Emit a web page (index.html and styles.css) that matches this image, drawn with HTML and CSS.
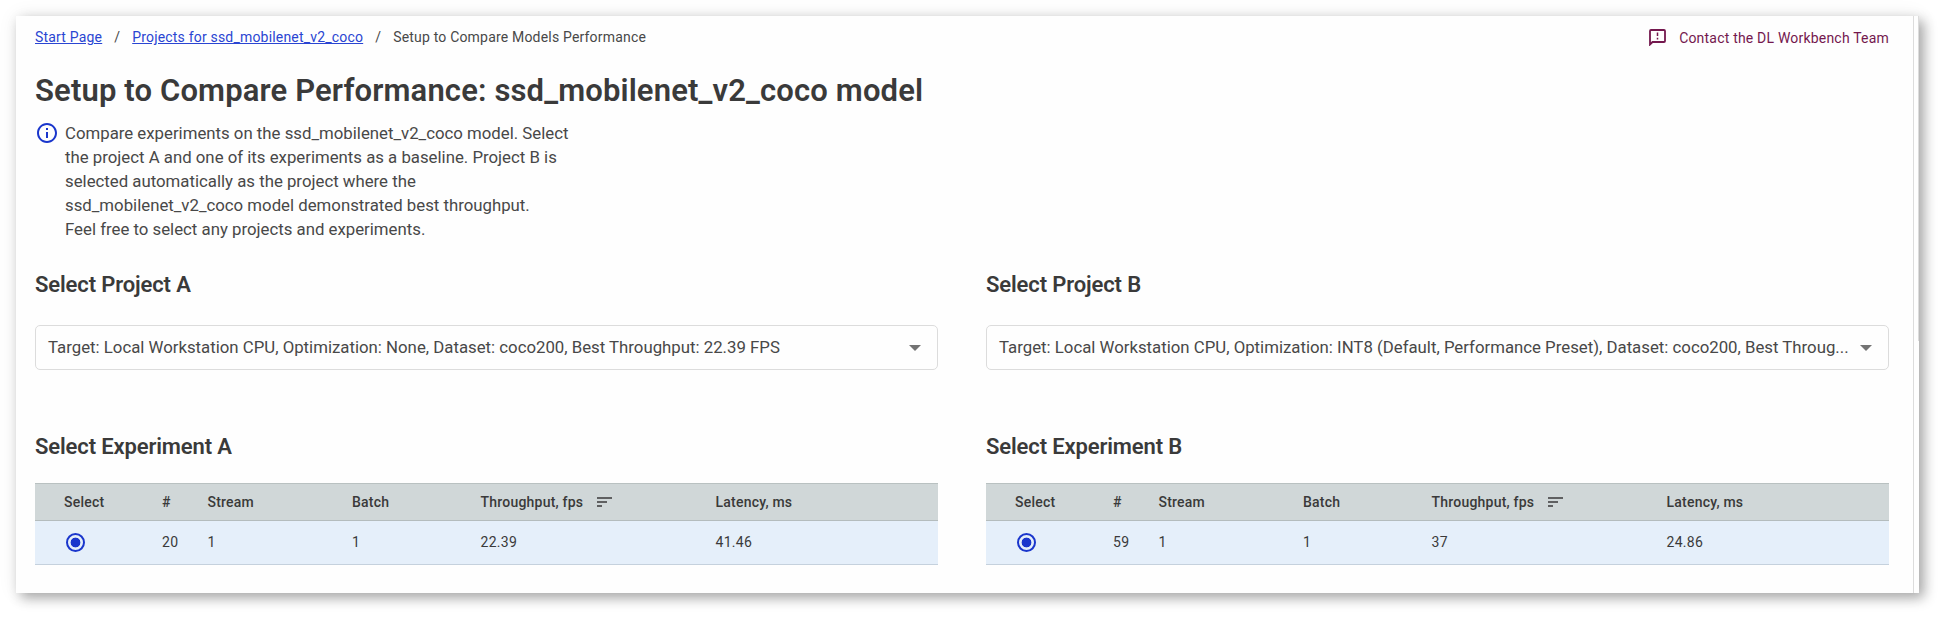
FILE: index.html
```html
<!DOCTYPE html>
<html lang="en">
<head>
<meta charset="utf-8">
<title>Setup to Compare Performance</title>
<link rel="stylesheet" href="styles.css">
</head>
<body>
<div class="window">
  <main class="page">
    <header class="topbar">
      <nav class="crumbs"><a class="crumb-link" href="#">Start Page</a><span class="sep">/</span><a class="crumb-link" href="#">Projects for ssd_mobilenet_v2_coco</a><span class="sep">/</span><span>Setup to Compare Models Performance</span></nav>
      <a class="contact" href="#">
        <svg class="contact-icon" viewBox="0 0 17 17"><path d="M1 15.5V2Q1 1 2 1H15Q16 1 16 2V12Q16 13 15 13H3.5Z" fill="none" stroke="currentColor" stroke-width="1.8"/><path d="M8.5 3.5V7M8.5 8.7V10.4" stroke="currentColor" stroke-width="1.5"/></svg>
        <span>Contact the DL Workbench Team</span>
      </a>
    </header>
    <h1 class="title">Setup to Compare Performance: ssd_mobilenet_v2_coco model</h1>
    <section class="info">
      <svg class="info-icon" viewBox="0 0 24 24"><path fill="currentColor" d="M11 7h2v2h-2zm0 4h2v6h-2zm1-9C6.48 2 2 6.48 2 12s4.48 10 10 10 10-4.48 10-10S17.52 2 12 2zm0 18c-4.41 0-8-3.59-8-8s3.59-8 8-8 8 3.59 8 8-3.59 8-8 8z"/></svg>
      <p class="info-text">Compare experiments on the ssd_mobilenet_v2_coco model. Select the project A and one of its experiments as a baseline. Project B is selected automatically as the project where the ssd_mobilenet_v2_coco model demonstrated best throughput.<br>Feel free to select any projects and experiments.</p>
    </section>
    <div class="columns">
      <section class="column">
        <h2 class="heading">Select Project A</h2>
        <div class="select"><span class="select-value">Target: Local Workstation CPU, Optimization: None, Dataset: coco200, Best Throughput: 22.39 FPS</span><span class="arrow"></span></div>
        <h2 class="heading">Select Experiment A</h2>
        <div class="table">
          <div class="row head"><span>Select</span><span>#</span><span>Stream</span><span>Batch</span><span class="sortable">Throughput, fps<svg class="sort-icon" viewBox="0 0 15 10"><path d="M0 1H15M0 5H10M0 9H5" stroke="currentColor" stroke-width="1.5"/></svg></span><span>Latency, ms</span></div>
          <div class="row body"><span class="radio"></span><span>20</span><span>1</span><span>1</span><span>22.39</span><span>41.46</span></div>
        </div>
      </section>
      <section class="column">
        <h2 class="heading">Select Project B</h2>
        <div class="select"><span class="select-value">Target: Local Workstation CPU, Optimization: INT8 (Default, Performance Preset), Dataset: coco200, Best Throug...</span><span class="arrow"></span></div>
        <h2 class="heading">Select Experiment B</h2>
        <div class="table">
          <div class="row head"><span>Select</span><span>#</span><span>Stream</span><span>Batch</span><span class="sortable">Throughput, fps<svg class="sort-icon" viewBox="0 0 15 10"><path d="M0 1H15M0 5H10M0 9H5" stroke="currentColor" stroke-width="1.5"/></svg></span><span>Latency, ms</span></div>
          <div class="row body"><span class="radio"></span><span>59</span><span>1</span><span>1</span><span>37</span><span>24.86</span></div>
        </div>
      </section>
    </div>
  </main>
  <div class="scrollbar"><div class="thumb"></div></div>
</div>
</body>
</html>
```
FILE: styles.css
```css
* { box-sizing: border-box; }
body {
  margin: 0;
  padding: 16px 24px 24px 16px;
  height: 617px;
  overflow: hidden;
  background: #fff;
  color: #3a3a3a;
  font-family: Roboto, "Liberation Sans", sans-serif;
}
.window {
  display: flex;
  height: 577px;
  background: #fefefe;
  box-shadow: 5px 5px 12px rgba(0, 0, 0, 0.32), 0 0 18px rgba(0, 0, 0, 0.08);
}
.page {
  flex: 1;
  min-width: 0;
  padding: 12px 24px 0 19px;
}
.scrollbar {
  width: 6px;
  border-left: 1px solid #dcdcdc;
}
.thumb {
  height: 325px;
  border-right: 1px solid #dcdcdc;
}
.topbar {
  display: flex;
  justify-content: space-between;
  height: 20px;
  font-size: 14px;
  line-height: 20px;
}
.crumbs {
  display: flex;
  color: #484848;
  letter-spacing: 0.19px;
  line-height: 18px;
}
.crumb-link {
  color: #2a45d2;
  text-decoration: underline;
}
.sep { margin: 0 12px; }
.contact {
  display: flex;
  gap: 13px;
  color: #74184e;
  font-weight: 450;
  letter-spacing: 0.2px;
  line-height: 21px;
  text-decoration: none;
}
.contact-icon {
  width: 17px;
  height: 17px;
  margin-top: 1px;
}
.title {
  margin: 23px 0 0;
  font-size: 31px;
  font-weight: 600;
  line-height: 40px;
  letter-spacing: 0.14px;
}
.info {
  display: flex;
  gap: 6px;
  margin-top: 10px;
}
.info-icon {
  width: 24px;
  height: 24px;
  color: #1a36cc;
}
.info-text {
  width: 520px;
  margin: 0;
  color: #484848;
  font-size: 16.8px;
  line-height: 24px;
}
.columns {
  display: grid;
  grid-template-columns: 903px 903px;
  gap: 48px;
  margin-top: 32px;
}
.heading {
  margin: 0;
  font-size: 22px;
  font-weight: 600;
  line-height: 24px;
  letter-spacing: -0.13px;
}
.select {
  display: flex;
  align-items: center;
  justify-content: space-between;
  height: 45px;
  margin: 28px 0 65px;
  padding: 0 16px 0 12px;
  border: 1px solid #dcdcdc;
  border-radius: 5px;
  color: #484848;
  font-size: 16.8px;
}
.select-value {
  padding-bottom: 2px;
  white-space: nowrap;
}
.arrow {
  border: 6px solid transparent;
  border-top-color: #737373;
  border-bottom-width: 0;
}
.table {
  margin-top: 24px;
  border-top: 1px solid #b9c1c1;
  font-size: 14px;
  font-weight: 500;
  letter-spacing: 0.22px;
}
.row {
  display: grid;
  grid-template-columns: 98px 45.5px 144.5px 128.5px 235px 1fr;
  align-items: center;
  padding-left: 29px;
}
.head {
  height: 37px;
  background: #d0d7d8;
  border-bottom: 1px solid #b4bcbd;
}
.body {
  height: 44px;
  padding-bottom: 1px;
  background: #e5effa;
  border-bottom: 1px solid #c5d1dd;
  font-weight: 450;
  letter-spacing: 0.3px;
}
.sortable {
  display: flex;
  align-items: center;
  gap: 14px;
}
.sort-icon {
  width: 15px;
  height: 10px;
}
.radio {
  width: 19px;
  height: 19px;
  margin-left: 2px;
  border: 2px solid #1a36cc;
  border-radius: 50%;
  background: radial-gradient(circle, #1a36cc 4.6px, transparent 5.2px);
}
```
